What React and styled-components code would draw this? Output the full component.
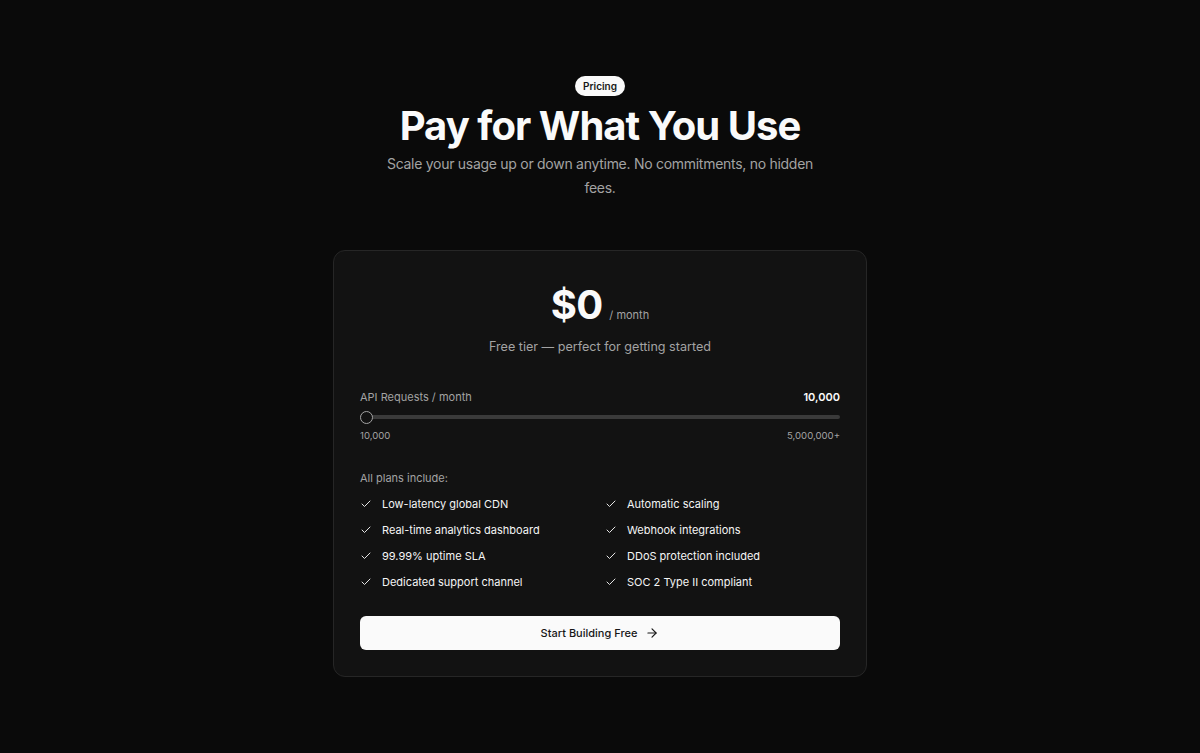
import React from "react";
import styled, { createGlobalStyle } from "styled-components";
import { Check, ArrowRight } from "lucide-react";

const Global = createGlobalStyle`
  html, body { margin: 0; padding: 0; background: #0a0a0a; }
  body { font-family: Inter, "Noto Sans", sans-serif; color: #fafafa; -webkit-font-smoothing: antialiased; }
  * { box-sizing: border-box; }
`;

const Page = styled.main`
  min-height: 753px;
  background: #0a0a0a;
  display: flex;
  flex-direction: column;
  align-items: center;
  padding-top: 76px;
`;

const Header = styled.header`
  display: flex;
  flex-direction: column;
  align-items: center;
  text-align: center;
`;

const Pill = styled.span`
  display: inline-flex;
  align-items: center;
  height: 20px;
  padding: 0 8px;
  border-radius: 999px;
  background: #fafafa;
  color: #171717;
  font-size: 10px;
  font-weight: 600;
`;

const Title = styled.h1`
  margin: 6px 0 0;
  font-size: 40px;
  line-height: 48px;
  font-weight: 700;
  letter-spacing: -0.024em;
  color: #fafafa;
`;

const Subtitle = styled.p`
  margin: 2px 0 0;
  max-width: 448px;
  font-size: 14px;
  line-height: 24px;
  letter-spacing: -0.02em;
  color: #a3a3a3;
`;

const Card = styled.section`
  margin-top: 50px;
  width: 534px;
  background: #121212;
  border: 1px solid #262626;
  border-radius: 12px;
  padding: 32px 26px 26px;
  display: flex;
  flex-direction: column;
`;

const PriceRow = styled.div`
  display: flex;
  justify-content: center;
  align-items: baseline;
  gap: 7px;
`;

const Amount = styled.span`
  font-size: 40px;
  line-height: 44px;
  font-weight: 700;
  letter-spacing: -0.02em;
  color: #fafafa;
`;

const Per = styled.span`
  font-size: 11px;
  color: #a3a3a3;
`;

const Tier = styled.p`
  margin: 10px 0 0;
  text-align: center;
  font-size: 12.6px;
  line-height: 20px;
  color: #a3a3a3;
`;

const SliderBlock = styled.div`
  margin-top: 32px;
  display: flex;
  flex-direction: column;
`;

const SliderHead = styled.div`
  display: flex;
  justify-content: space-between;
  align-items: center;
  font-size: 11px;
  line-height: 16px;
`;

const Muted = styled.span`
  color: #a3a3a3;
`;

const Value = styled.span`
  color: #fafafa;
  font-weight: 600;
`;

const Track = styled.div`
  position: relative;
  margin-top: 10px;
  height: 4px;
  border-radius: 999px;
  background: #3a3a3a;
`;

const Thumb = styled.span`
  position: absolute;
  left: 0;
  top: 50%;
  width: 13px;
  height: 13px;
  margin-top: -6.5px;
  border-radius: 50%;
  background: #121212;
  border: 1px solid #a3a3a3;
`;

const RangeLabels = styled.div`
  margin-top: 10px;
  display: flex;
  justify-content: space-between;
  font-size: 9.6px;
  line-height: 14px;
  color: #a3a3a3;
`;

const IncludesLabel = styled.p`
  margin: 27px 0 0;
  font-size: 11px;
  line-height: 16px;
  color: #a3a3a3;
`;

const Features = styled.ul`
  list-style: none;
  margin: 9px 0 0;
  padding: 0;
  display: grid;
  grid-template-columns: 1fr 1fr;
  column-gap: 10px;
  row-gap: 8px;
`;

const Feature = styled.li`
  display: flex;
  align-items: center;
  gap: 10px;
  height: 18px;
  font-size: 11px;
  color: #f5f5f5;
  svg { flex-shrink: 0; color: #e5e5e5; }
`;

const Button = styled.button`
  margin-top: 25px;
  height: 34px;
  width: 100%;
  border: none;
  border-radius: 6px;
  background: #fafafa;
  color: #171717;
  font-family: inherit;
  font-size: 11px;
  font-weight: 500;
  display: flex;
  align-items: center;
  justify-content: center;
  gap: 8px;
  cursor: pointer;
`;

const features = [
  "Low-latency global CDN",
  "Automatic scaling",
  "Real-time analytics dashboard",
  "Webhook integrations",
  "99.99% uptime SLA",
  "DDoS protection included",
  "Dedicated support channel",
  "SOC 2 Type II compliant",
];

export default function App() {
  return (
    <>
      <Global />
      <Page>
        <Header>
          <Pill>Pricing</Pill>
          <Title>Pay for What You Use</Title>
          <Subtitle>
            Scale your usage up or down anytime. No commitments, no hidden fees.
          </Subtitle>
        </Header>
        <Card>
          <PriceRow>
            <Amount>$0</Amount>
            <Per>/ month</Per>
          </PriceRow>
          <Tier>Free tier — perfect for getting started</Tier>
          <SliderBlock>
            <SliderHead>
              <Muted>API Requests / month</Muted>
              <Value>10,000</Value>
            </SliderHead>
            <Track>
              <Thumb />
            </Track>
            <RangeLabels>
              <span>10,000</span>
              <span>5,000,000+</span>
            </RangeLabels>
          </SliderBlock>
          <IncludesLabel>All plans include:</IncludesLabel>
          <Features>
            {features.map((f) => (
              <Feature key={f}>
                <Check size={12} strokeWidth={2} />
                {f}
              </Feature>
            ))}
          </Features>
          <Button>
            Start Building Free
            <ArrowRight size={14} strokeWidth={2} />
          </Button>
        </Card>
      </Page>
    </>
  );
}
